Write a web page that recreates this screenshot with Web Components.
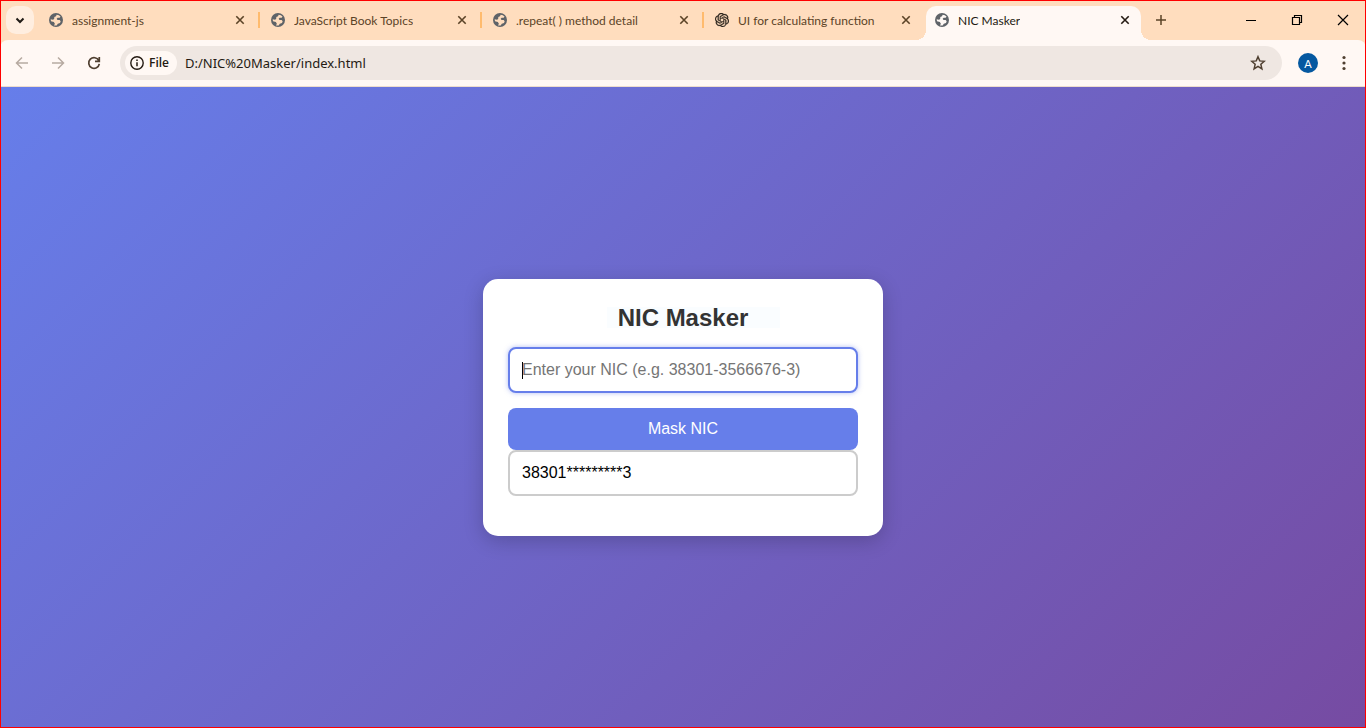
<!DOCTYPE html>
<html lang="en">
<head>
<meta charset="utf-8">
<title>NIC Masker</title>
<style>
  html, body { height: 100%; }
  body { margin: 0; font-family: Lato, "Open Sans", sans-serif; }
</style>
</head>
<body>
<browser-window>
  <tab-strip slot="tabs">
    <browser-tab icon="globe">assignment-js</browser-tab>
    <browser-tab icon="globe">JavaScript Book Topics</browser-tab>
    <browser-tab icon="globe">.repeat( ) method detail</browser-tab>
    <browser-tab icon="knot" last>UI for calculating function</browser-tab>
    <browser-tab icon="globe" active>NIC Masker</browser-tab>
  </tab-strip>
  <address-bar slot="toolbar" url="D:/NIC%20Masker/index.html"></address-bar>
  <nic-masker></nic-masker>
</browser-window>

<script>
const ICONS = {
  chevron: [16, '<path d="M4.5 6.5 8 10l3.5-3.5" fill="none" stroke="currentColor" stroke-width="2"/>'],
  globe: [24, '<circle cx="12" cy="12" r="10.5" fill="currentColor"/><path fill="var(--tab-fill)" d="M13 4c2.500 0 4.500 1.200 5.800 2.800l-1.300 1.700h-3l-1.500 1.700 1.200 1.800h3.300l1.500 2-1 2.500-3.300 1-1.700 2.700-4 .2 1.300-2.900-1.500-2.500-4.300-1.200L4 11l3.500.5 1.700-1 .3-3L12 6.500z"/>'],
  knot: [24, '<path fill="currentColor" stroke="currentColor" stroke-width=".5" d="M22.2819 9.8211a5.9847 5.9847 0 0 0-.5157-4.9108 6.0462 6.0462 0 0 0-6.5098-2.9A6.0651 6.0651 0 0 0 4.9807 4.1818a5.9847 5.9847 0 0 0-3.9977 2.9 6.0462 6.0462 0 0 0 .7427 7.0966 5.98 5.98 0 0 0 .511 4.9107 6.051 6.051 0 0 0 6.5146 2.9001A5.9847 5.9847 0 0 0 13.2599 24a6.0557 6.0557 0 0 0 5.7718-4.2058 5.9894 5.9894 0 0 0 3.9977-2.9001 6.0557 6.0557 0 0 0-.7475-7.0729zm-9.022 12.6081a4.4755 4.4755 0 0 1-2.8764-1.0408l.1419-.0804 4.7783-2.7582a.7948.7948 0 0 0 .3927-.6813v-6.7369l2.02 1.1686a.071.071 0 0 1 .038.052v5.5826a4.504 4.504 0 0 1-4.4945 4.4944zm-9.6607-4.1254a4.4708 4.4708 0 0 1-.5346-3.0137l.142.0852 4.783 2.7582a.7712.7712 0 0 0 .7806 0l5.8428-3.3685v2.3324a.0804.0804 0 0 1-.0332.0615L9.74 19.9502a4.4992 4.4992 0 0 1-6.1408-1.6464zM2.3408 7.8956a4.485 4.485 0 0 1 2.3655-1.9728V11.6a.7664.7664 0 0 0 .3879.6765l5.8144 3.3543-2.0201 1.1685a.0757.0757 0 0 1-.071 0l-4.8303-2.7865A4.504 4.504 0 0 1 2.3408 7.872zm16.5963 3.8558L13.1038 8.364 15.1192 7.2a.0757.0757 0 0 1 .071 0l4.8303 2.7913a4.4944 4.4944 0 0 1-.6765 8.1042v-5.6772a.79.79 0 0 0-.407-.667zm2.0107-3.0231l-.142-.0852-4.7735-2.7818a.7759.7759 0 0 0-.7854 0L9.409 9.2297V6.8974a.0662.0662 0 0 1 .0284-.0615l4.8303-2.7866a4.4992 4.4992 0 0 1 6.6802 4.66zM8.3065 12.863l-2.02-1.1638a.0804.0804 0 0 1-.038-.0567V6.0742a4.4992 4.4992 0 0 1 7.3757-3.4537l-.142.0805L8.704 5.459a.7948.7948 0 0 0-.3927.6813zm1.0976-2.3654l2.602-1.4998 2.6069 1.4998v2.9994l-2.5974 1.4997-2.6067-1.4997Z"/>'],
  close: [16, '<path d="M4.300 4.300l7.400 7.400M11.700 4.300l-7.400 7.400" fill="none" stroke="currentColor" stroke-width="1.600"/>'],
  plus: [16, '<path d="M8 3v10M3 8h10" fill="none" stroke="currentColor" stroke-width="1.500"/>'],
  minimize: [16, '<path d="M3 8.500h10" fill="none" stroke="currentColor"/>'],
  restore: [16, '<path d="M3.500 5.500h7v7h-7zM5.500 5.500v-2h7v7h-2" fill="none" stroke="currentColor" stroke-width="1.200"/>'],
  quit: [16, '<path d="M3 3l10 10M13 3L3 13" fill="none" stroke="currentColor" stroke-width="1.200"/>'],
  back: [16, '<path d="M14 8H3M8 2.500 2.500 8 8 13.500" fill="none" stroke="currentColor" stroke-width="1.500"/>'],
  forward: [16, '<path d="M2 8h11M8 2.500 13.500 8 8 13.500" fill="none" stroke="currentColor" stroke-width="1.500"/>'],
  reload: [16, '<path d="M12.800 5.600A5.300 5.300 0 1 0 13.300 8.800M13.300 2v4.300H9" fill="none" stroke="currentColor" stroke-width="1.700"/>'],
  info: [16, '<circle cx="8" cy="8" r="6.200" fill="none" stroke="currentColor" stroke-width="1.400"/><path d="M8 7.300v4M8 4.600v1.500" stroke="currentColor" stroke-width="1.500"/>'],
  star: [16, '<path d="M8 1.700l1.750 4.200 4.550.4-3.450 3 1.050 4.500L8 11.400l-3.900 2.400 1.050-4.500-3.450-3 4.550-.4z" fill="none" stroke="currentColor" stroke-width="1.500"/>'],
  dots: [16, '<g fill="currentColor"><circle cx="8" cy="2.500" r="1.600"/><circle cx="8" cy="8" r="1.600"/><circle cx="8" cy="13.500" r="1.600"/></g>']
};

const BUTTON_RESET = 'button { border: 0; padding: 0; margin: 0; background: none; color: inherit; font: inherit; display: flex; align-items: center; justify-content: center; }';

class BaseElement extends HTMLElement {
  connectedCallback() {
    if (this.shadowRoot) return;
    this.attachShadow({ mode: 'open' }).innerHTML = this.view();
  }
}

class UiIcon extends BaseElement {
  view() {
    const [box, shape] = ICONS[this.getAttribute('name')];
    return `<style>
      :host { display: block; flex: none; width: 16px; height: 16px; }
      svg { display: block; width: 100%; height: 100%; }
    </style><svg viewBox="0 0 ${box} ${box}" aria-hidden="true">${shape}</svg>`;
  }
}

class BrowserWindow extends BaseElement {
  view() {
    return `<style>
      :host { display: flex; flex-direction: column; min-height: 100vh; position: relative; }
      :host::after { content: ""; position: absolute; inset: 0; border: 1px solid #f00; pointer-events: none; }
      header { background: #ffddbe; }
      main { flex: 1; display: flex; }
      ::slotted(nic-masker) { flex: 1; }
    </style>
    <header><slot name="tabs"></slot><slot name="toolbar"></slot></header>
    <main><slot></slot></main>`;
  }
}

class TabStrip extends BaseElement {
  view() {
    return `<style>
      ${BUTTON_RESET}
      :host { display: flex; align-items: flex-start; height: 34px; padding: 6px 0 0 6px; color: #5b4327; }
      .search { flex: none; width: 28px; height: 28px; border-radius: 10px; background: #ffeee0; color: #1f1a15; }
      .tabs { display: flex; flex: 0 1 1103px; min-width: 0; margin-left: 4px; }
      .new { flex: none; width: 28px; height: 28px; margin-left: 6px; }
      .controls { display: flex; flex: none; margin-left: auto; color: #000; }
      .controls button { width: 46px; height: 28px; }
    </style>
    <button class="search" aria-label="Search tabs"><ui-icon name="chevron"></ui-icon></button>
    <div class="tabs"><slot></slot></div>
    <button class="new" aria-label="New tab"><ui-icon name="plus"></ui-icon></button>
    <div class="controls">
      <button aria-label="Minimize"><ui-icon name="minimize"></ui-icon></button>
      <button aria-label="Restore"><ui-icon name="restore"></ui-icon></button>
      <button aria-label="Close window"><ui-icon name="quit"></ui-icon></button>
    </div>`;
  }
}

class BrowserTab extends BaseElement {
  view() {
    return `<style>
      ${BUTTON_RESET}
      :host { --tab-fill: #ffddbe; display: flex; align-items: center; box-sizing: border-box; flex: 0 1 222px; min-width: 0; height: 34px; padding: 0 12px 6px 10px; position: relative; font-size: 12px; line-height: 16px; }
      :host(:not([active]):not([last]))::after { content: ""; position: absolute; right: 0; top: 6px; width: 2px; height: 16px; background: #ffbb6e; }
      :host([active]) { --tab-fill: #fff8f4; flex-basis: 215px; padding: 0 8px 6px; background: #fff8f4; border-radius: 10px 10px 0 0; color: #241a12; }
      :host([active])::before, :host([active])::after { content: ""; position: absolute; bottom: 0; width: 10px; height: 10px; }
      :host([active])::before { right: 100%; background: radial-gradient(circle at 0 0, transparent 10px, #fff8f4 10px); }
      :host([active])::after { left: 100%; background: radial-gradient(circle at 100% 0, transparent 10px, #fff8f4 10px); }
      .page { flex: 1; min-width: 0; height: 28px; justify-content: flex-start; gap: 8px; }
      .page ui-icon { color: #5f6368; }
      :host([icon="knot"]) .page ui-icon { color: #2b241c; width: 14px; height: 14px; padding: 1px; }
      .title { padding-top: 1px; overflow: hidden; white-space: nowrap; }
    </style>
    <button class="page"><ui-icon name="${this.getAttribute('icon')}"></ui-icon><span class="title"><slot></slot></span></button>
    <button aria-label="Close tab"><ui-icon name="close"></ui-icon></button>`;
  }
}

class AddressBar extends BaseElement {
  view() {
    return `<style>
      ${BUTTON_RESET}
      :host { display: flex; align-items: center; gap: 8px; height: 46px; padding: 0 8px; background: #fff8f4; border-bottom: 1px solid #eddccd; border-radius: 8px 8px 0 0; color: #4f3f30; }
      .tool { flex: none; width: 28px; height: 28px; }
      .off { color: #b7aaa1; }
      .box { flex: 1; display: flex; align-items: center; box-sizing: border-box; height: 34px; margin: 0 4px; padding: 0 16px 0 5px; border-radius: 17px; background: #efe7e2; }
      .chip { flex: none; height: 24px; padding: 0 8px 0 4px; gap: 4px; border-radius: 12px; background: #fff8f4; color: #241a12; font: 600 12px/16px "Open Sans", sans-serif; }
      input { flex: 1; min-width: 0; height: 24px; margin: 0 8px; padding: 0; border: 0; outline: 0; background: none; color: #241a12; font: 13px/24px "Noto Sans", "Open Sans", sans-serif; }
      .avatar span { display: flex; align-items: center; justify-content: center; width: 20px; height: 20px; border-radius: 50%; background: #0558a0; color: #fff; font-size: 11px; }
    </style>
    <button class="tool off" aria-label="Back"><ui-icon name="back"></ui-icon></button>
    <button class="tool off" aria-label="Forward"><ui-icon name="forward"></ui-icon></button>
    <button class="tool" aria-label="Reload"><ui-icon name="reload"></ui-icon></button>
    <div class="box">
      <button class="chip"><ui-icon name="info"></ui-icon>File</button>
      <input type="text" aria-label="Address" value="${this.getAttribute('url')}">
      <button aria-label="Bookmark this page"><ui-icon name="star"></ui-icon></button>
    </div>
    <button class="tool avatar" aria-label="Profile"><span>A</span></button>
    <button class="tool" aria-label="Menu"><ui-icon name="dots"></ui-icon></button>`;
  }
}

class NicMasker extends BaseElement {
  view() {
    return `<style>
      :host { display: flex; align-items: center; justify-content: center; background: linear-gradient(135deg, #667eea, #764ba2); font-family: Arial, "Liberation Sans", sans-serif; }
      form { box-sizing: border-box; width: 400px; max-width: 100%; padding: 25px; border-radius: 15px; background: #fff; box-shadow: 0 5px 20px rgba(0, 0, 0, .2); text-align: center; }
      h2 { margin: 0 0 15px; font-size: 24px; line-height: 28px; color: #333; background: linear-gradient(#fafdff, #fafdff) 99px 3px / 173px 21px no-repeat; }
      input { display: block; box-sizing: border-box; width: 100%; margin: 0 0 15px; padding: 12px; border: 2px solid #ccc; border-radius: 8px; outline: 0; background: #fff; color: #000; font: 16px/18px Arial, "Liberation Sans", sans-serif; height: 46px; }
      input::placeholder { color: #757575; }
      #nic { border-color: #667eea; box-shadow: 0 0 5px rgba(102, 126, 234, .5); background: linear-gradient(#000, #000) 12px 13px / 1px 17px no-repeat #fff; }
      button { display: block; width: 100%; height: 42px; padding: 12px; border: 0; border-radius: 8px; background: #667eea; color: #fff; font: 16px/18px Arial, "Liberation Sans", sans-serif; }
    </style>
    <form>
      <h2>NIC Masker</h2>
      <input id="nic" type="text" aria-label="NIC number" placeholder="Enter your NIC (e.g. 38301-3566676-3)">
      <button type="button">Mask NIC</button>
      <input id="masked" type="text" aria-label="Masked NIC" value="38301*********3" readonly>
    </form>`;
  }
  connectedCallback() {
    super.connectedCallback();
    const find = id => this.shadowRoot.getElementById(id);
    this.shadowRoot.querySelector('button').addEventListener('click', () => {
      const nic = find('nic').value;
      find('masked').value = nic.slice(0, 5) + '*'.repeat(Math.max(0, nic.length - 6)) + nic.slice(-1);
    });
  }
}

customElements.define('ui-icon', UiIcon);
customElements.define('browser-window', BrowserWindow);
customElements.define('tab-strip', TabStrip);
customElements.define('browser-tab', BrowserTab);
customElements.define('address-bar', AddressBar);
customElements.define('nic-masker', NicMasker);
</script>
</body>
</html>
